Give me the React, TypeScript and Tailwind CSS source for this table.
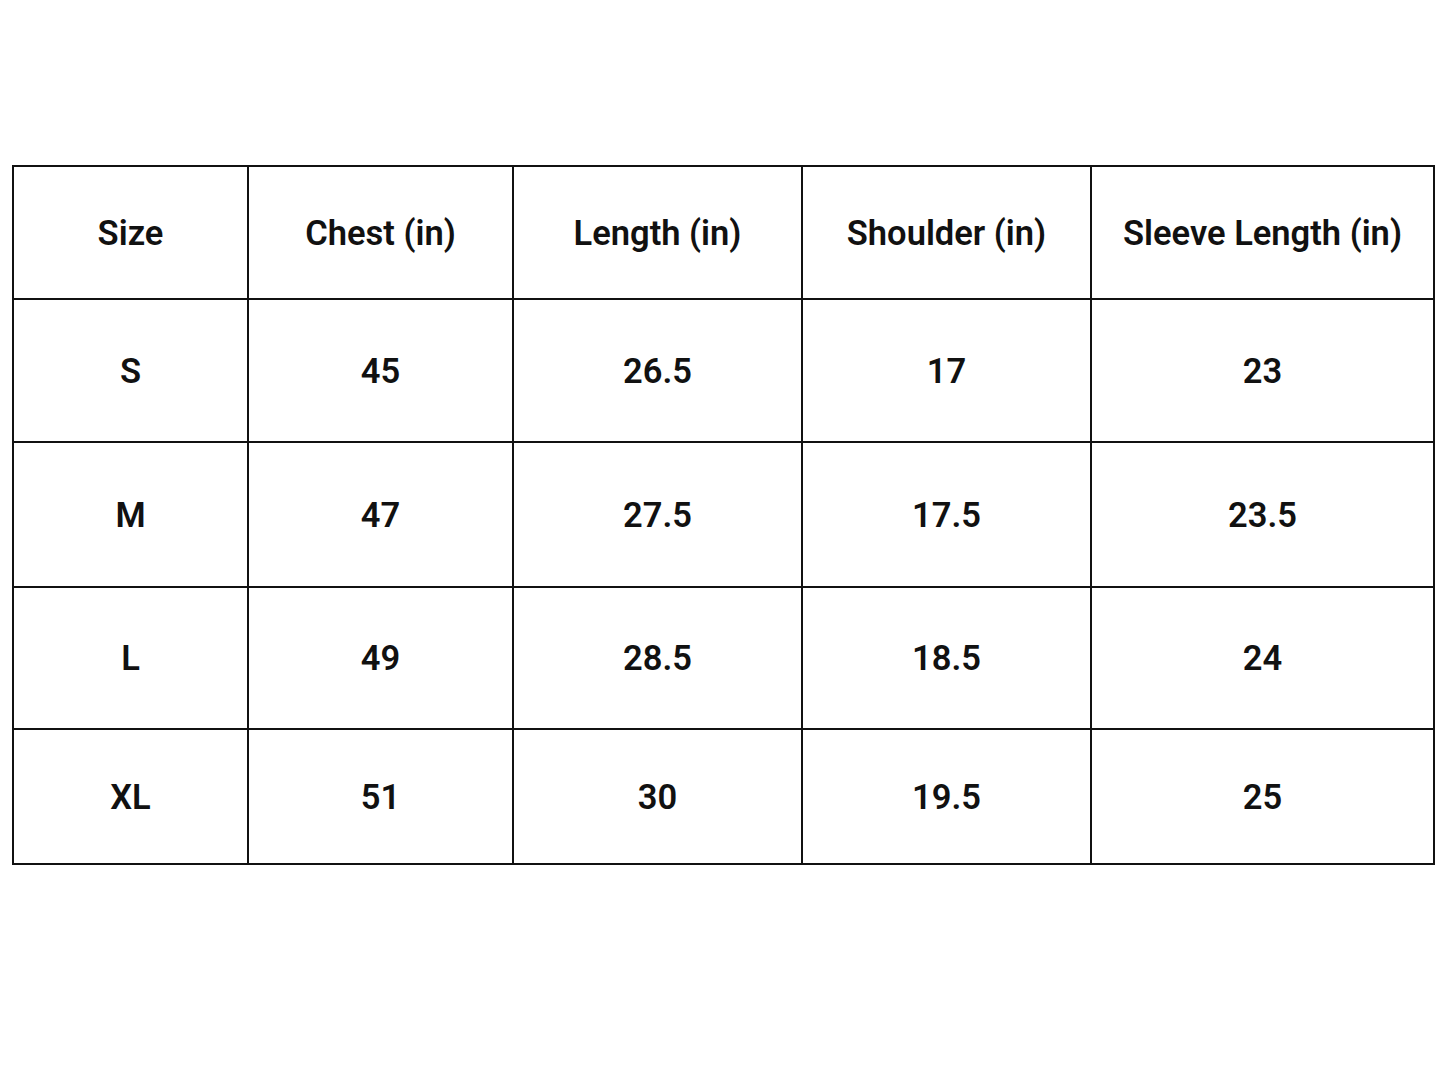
const headers = ["Size", "Chest (in)", "Length (in)", "Shoulder (in)", "Sleeve Length (in)"];

const rows = [
    { cells: ["S", "45", "26.5", "17", "23"], h: "h-[141px]" },
    { cells: ["M", "47", "27.5", "17.5", "23.5"], h: "h-[143px]" },
    { cells: ["L", "49", "28.5", "18.5", "24"], h: "h-[140px]" },
    { cells: ["XL", "51", "30", "19.5", "25"], h: "h-[133px]" },
];

const App = () => {
    return (
        <div className="w-[1448px] h-[1086px] bg-white pt-[165px] pl-[12px] font-['Roboto',sans-serif] text-[#111]">
            <div className="w-[1423px] grid grid-cols-[233px_263px_287px_287px_341px] gap-[2px] p-[2px] bg-[#111]">
                {headers.map((h) => (
                    <div
                        key={h}
                        className="h-[131px] pt-[2px] bg-white flex items-center justify-center text-[34.5px] font-semibold"
                    >
                        {h}
                    </div>
                ))}
                {rows.map((row) =>
                    row.cells.map((c, i) => (
                        <div
                            key={row.cells[0] + i}
                            className={`${row.h} pt-[2px] bg-white flex items-center justify-center text-[34.5px] font-semibold`}
                        >
                            {c}
                        </div>
                    ))
                )}
            </div>
        </div>
    );
};

export default App;
